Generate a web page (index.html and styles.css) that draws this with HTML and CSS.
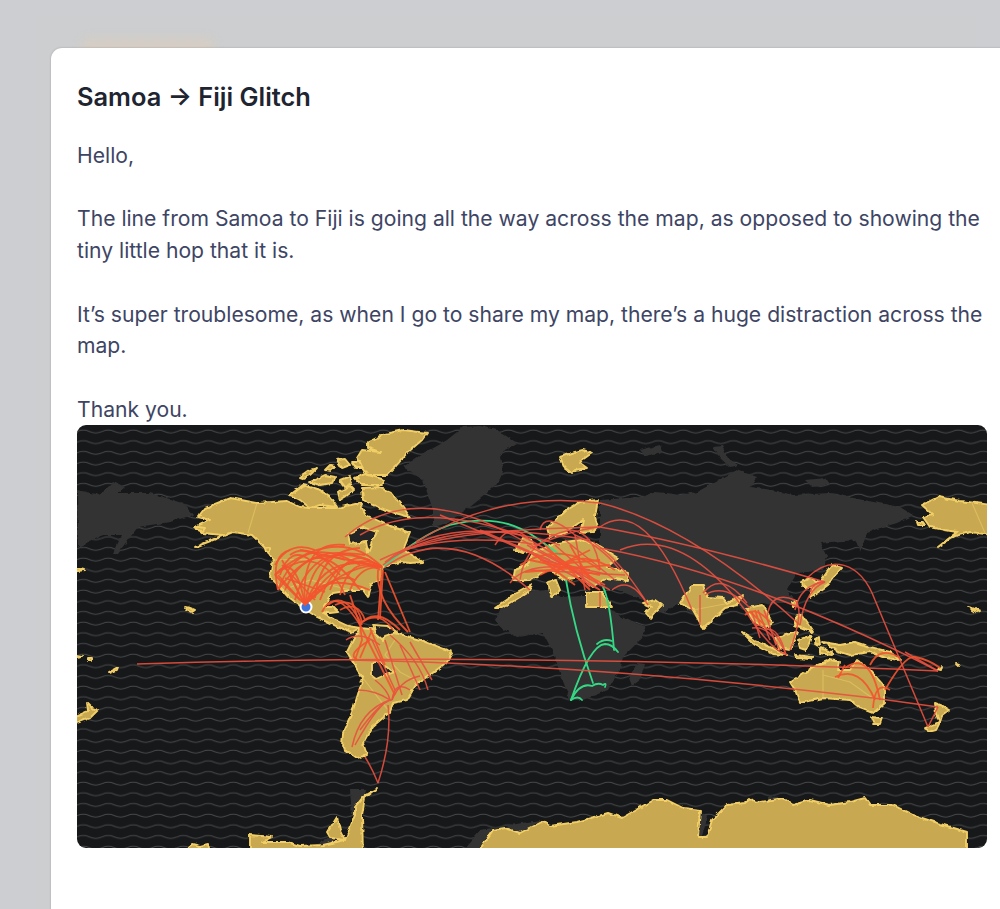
FILE: index.html
```html
<!DOCTYPE html>
<html lang="en">
<head>
<meta charset="utf-8">
<title>Samoa → Fiji Glitch</title>
<link rel="stylesheet" href="styles.css">
</head>
<body>
<div class="backdrop"><div class="panel"></div><div class="glow"></div></div>
<main class="card">
  <h1 class="title">Samoa → Fiji Glitch</h1>
  <p class="body-text">Hello,<br><br>The line from Samoa to Fiji is going all the way across the map, as opposed to showing the tiny little hop that it is.<br><br>It’s super troublesome, as when I go to share my map, there’s a huge distraction across the map.<br><br>Thank you.</p>
  <svg class="map" viewBox="77 425 910 423" role="img" aria-label="World map with flight routes">
    <defs>
      <pattern id="waves" x="77" y="425" width="25" height="10.67" patternUnits="userSpaceOnUse">
        <path class="wave" d="M0 6.5Q6.25 3.7 12.5 6.5T25 6.5"/>
      </pattern>
      <filter id="rough" x="-5%" y="-5%" width="110%" height="110%" color-interpolation-filters="sRGB">
        <feTurbulence type="fractalNoise" baseFrequency="0.16" numOctaves="2" seed="4" result="n"/>
        <feDisplacementMap in="SourceGraphic" in2="n" scale="4" xChannelSelector="R" yChannelSelector="G"/>
      </filter>
    </defs>
    <rect class="sea" x="77" y="425" width="910" height="423"/>
    <rect class="sea-waves" x="77" y="425" width="910" height="423"/>

    <g class="dark">
      <path d="M403 467L425 452 447 440 463 427 480 426 497 430 517 443 505 450 500 457 503 470 500 480 485 495 470 507 447 523 433 527 433 510 428 495 423 480Z"/>
      <path d="M600 500L640 497 655 492 667 493 680 495 697 492 715 482 737 470 757 477 750 487 772 490 793 495 830 493 863 500 900 507 913 515 897 523 867 532 860 552 855 540 820 543 827 557 823 570 797 573 787 590 795 603 763 603 743 610 730 600 707 627 680 603 662 613 643 600 617 590 590 585 600 540Z"/>
      <path d="M495 620L503 604 520 592 548 590 560 597 585 596 607 607 627 620 647 627 640 640 623 657 620 670 608 690 583 700 570 700 560 673 552 650 543 633 517 637 500 627Z"/>
      <path d="M638 663L645 664 640 680 632 686 629 678Z"/>
      <path d="M77 490L100 495 113 482 125 487 118 493 150 493 183 503 193 515 170 522 138 527 118 553 113 553 122 535 103 535 78 547Z"/>
      <path d="M713 447L722 446 728 458 738 465 730 467 720 458Z"/>
      <path d="M640 450L660 445 662 452 645 456Z"/>
      <path d="M805 480L825 478 830 485 812 487Z"/>
      <path d="M465 848L480 830 540 820 540 828 490 848Z"/>
      <path d="M310 848L330 838 340 845 330 848Z"/>
      <path d="M350 790L365 790 360 815 352 815Z"/>
      <path d="M696 810L708 816 702 836 698 836Z"/>
      <path d="M765 802L770 796 780 797 772 805Z"/>
    </g>

    <g class="gold">
      <!-- North America -->
      <path d="M205 508L230 498 257 503 287 501 300 507 310 508 337 508 360 503 366 515 385 524 410 533 403 550 412 555 423 562 410 563 400 562 383 567 380 580 372 584 368 597 363 590 353 590 333 593 323 607 333 607 338 612 330 613 322 612 335 620 348 626 360 628 352 632 338 627 317 617 303 608 290 598 283 590 270 577 273 560 267 550 252 535 233 532 213 540 195 547 223 535 203 533 195 527 210 520 198 517Z"/>
      <path class="bay" d="M348 534L363 527 377 532 372 542 368 552 366 542 350 544Z"/>
      <!-- Arctic -->
      <path d="M368 442L385 434 403 430 427 433 422 440 407 453 397 465 387 475 367 475 357 458 362 450 380 452 368 448Z"/>
      <path d="M362 488L378 487 390 492 403 507 410 517 395 513 380 508 363 500Z"/>
      <path d="M290 495L303 485 320 490 330 497 337 507 320 505 310 508 300 500Z"/>
      <path d="M300 477L310 470 317 468 310 475 303 478Z"/>
      <path d="M310 482L325 475 335 477 332 483 320 485Z"/>
      <path d="M340 480L350 476 352 484 345 487Z"/>
      <path d="M355 478L365 474 385 480 382 485 362 485Z"/>
      <path d="M337 460L345 459 350 465 342 468Z"/>
      <path d="M352 462L360 462 362 468 356 468Z"/>
      <path d="M325 470L330 465 335 466 330 471Z"/>
      <path d="M338 492L350 486 354 490 345 497 340 500Z"/>
      <path d="M198 527L205 528 203 531 197 530Z"/>
      <path d="M265 548L270 547 270 552 266 552Z"/>
      <path d="M185 607L190 608 195 610 192 612 186 609Z"/>
      <!-- South America -->
      <path d="M360 628L380 630 403 635 420 640 452 652 447 662 427 677 417 683 407 700 393 703 390 712 372 727 363 743 367 755 357 758 342 747 343 733 353 710 363 678 347 652 353 640Z"/>
      <path class="bay" d="M373 625L388 626 397 632 384 636 383 640 376 634Z"/>
      <path class="bay" d="M372 663L380 661 390 670 395 672 385 675 376 679 372 676Z"/>
      <!-- Antarctica -->
      <path d="M478 852L493 830 505 828 520 833 540 823 543 822 550 826 577 822 608 813 622 818 653 800 667 800 683 808 700 810 698 837 707 837 712 820 727 805 745 803 750 799 755 803 783 798 793 805 810 800 830 805 850 802 865 798 870 805 893 805 913 815 937 823 967 832 967 852Z"/>
      <path d="M250 852L250 835 272 837 262 842 287 842 300 846 323 845 345 840 355 815 355 807 363 797 378 788 365 798 362 815 363 852Z"/>
      <path d="M337 817L340 830 345 840 330 838 327 833Z"/>
      <path d="M187 852L192 844 200 846 208 844 210 852Z"/>
      <!-- Europe -->
      <path d="M547 528L567 510 580 502 598 500 595 517 598 527 593 532 580 533 583 520 573 527 563 533 550 538Z"/>
      <path d="M593 543L605 550 618 558 607 567 628 573 628 581 607 578 593 587 580 577 563 580 558 575 547 570 530 580 513 580 515 570 527 565 533 553 557 543 580 540Z"/>
      <path d="M523 538L532 540 537 550 523 553 515 550Z"/>
      <path d="M495 608L517 593 532 585 528 592 512 602 502 608Z"/>
      <path d="M548 582L556 580 560 590 553 597 550 592Z"/>
      <path d="M560 457L575 452 583 450 592 453 582 460 580 463 587 468 575 470 572 473 565 468Z"/>
      <path d="M586 592L602 592 612 607 586 607Z"/>
      <path d="M643 603L655 600 662 605 655 612 650 618 645 612 652 607Z"/>
      <!-- Asia -->
      <path d="M680 603L692 585 703 585 707 597 723 598 727 603 743 595 737 605 725 608 703 628 693 610Z"/>
      <path d="M747 608L763 605 773 623 765 628 752 620Z"/>
      <path d="M742 632L755 640 787 655 772 654 755 645Z"/>
      <path d="M775 638L797 632 790 650 778 648Z"/>
      <path d="M795 617L802 615 813 632 803 628 795 625Z"/>
      <path d="M798 640L812 635 806 650 800 648Z"/>
      <path d="M795 655L813 657 812 659 797 658Z"/>
      <path d="M802 582L810 578 820 582 832 565 842 568 832 578 828 585 810 598 812 587 803 587Z"/>
      <path d="M792 602L797 601 798 607 793 607Z"/>
      <path d="M815 640L819 637 820 645 815 643Z"/>
      <path d="M820 648L832 652 832 655 820 653Z"/>
      <!-- Australasia -->
      <path d="M823 642L840 645 855 642 870 647 890 652 900 660 885 658 870 652 850 655 835 650Z"/>
      <path d="M790 682L813 667 830 660 840 662 838 670 850 670 857 660 867 667 885 687 885 703 873 713 860 708 850 700 823 698 800 703 795 690Z"/>
      <path d="M871 717L882 718 880 724 874 724Z"/>
      <path d="M935 703L943 706 950 710 942 716 940 722 936 715Z"/>
      <path d="M926 728L940 722 936 730 928 732Z"/>
      <path d="M937 670L942 667 941 671Z"/>
      <path d="M956 663L960 664 959 666Z"/>
      <path d="M968 607L972 608 980 611 976 612Z"/>
      <!-- Wrapped pieces -->
      <path d="M922 505L938 497 960 501 992 505 992 535 970 532 955 536 938 547 957 532 945 530 930 527 923 517 933 515Z"/>
      <path d="M917 522L923 522 925 525 918 525Z"/>
      <path d="M87 703L92 708 98 710 90 718 72 725 72 718 88 711Z"/>
      <path d="M72 655L82 657 72 659Z"/>
      <path d="M88 658L91 658 91 661 88 661Z"/>
      <path d="M109 672L118 667 117 670 110 673Z"/>
      <path d="M72 567L84 570 72 572Z"/>
    </g>

    <g class="inner">
      <path d="M257 503L248 533"/>
      <path d="M972 503L985 533"/>
      <path d="M272 560L370 558"/>
      <path d="M283 590L310 580 350 590"/>
      <path d="M395 640L385 655 400 672 415 680"/>
      <path d="M363 678L380 700 390 712"/>
      <path d="M823 670L823 698M823 675L850 682 875 700"/>
      <path d="M693 610L730 603"/>
    </g>

    <g class="green">
      <path d="M385 566Q420 535 450 525 500 512 535 537 548 546 560 555"/>
      <path d="M566 580Q574 630 593 683"/>
      <path d="M603 587Q610 600 614 650"/>
      <path d="M571 700Q590 645 605 644 612 644 618 652"/>
      <path d="M597 644Q604 638 612 641"/>
      <path d="M571 700Q580 682 592 686 598 682 603 685 607 682 605 687"/>
      <path d="M571 700Q578 695 582 700"/>
    </g>

    <circle class="marker" cx="306" cy="607" r="5.5"/>

    <g class="routes thin">
      <path d="M137 664Q500 652 938 671"/>
      <path d="M350 660Q600 665 873 698"/>
      <path d="M873 698L938 707"/>
      <path d="M600 503Q690 525 800 625"/>
      <path d="M600 527Q700 545 825 582"/>
      <path d="M600 527Q645 495 692 610"/>
      <path d="M620 550Q680 525 745 610"/>
      <path d="M593 542Q620 560 645 600"/>
      <path d="M612 590Q630 575 648 605"/>
      <path d="M600 548Q750 575 938 671"/>
      <path d="M807 578C830 555 860 560 875 600Q900 660 928 727"/>
      <path d="M938 707L928 727"/>
      <path d="M600 503Q500 490 416 542"/>
      <path d="M345 537Q400 490 480 520 540 545 600 590"/>
      <path d="M360 535Q420 500 520 535 570 560 590 587"/>
      <path d="M400 553Q440 530 600 527"/>
      <path d="M385 562Q450 510 560 545"/>
      <path d="M383 565Q440 515 590 540"/>
      <path d="M380 560Q440 530 540 545"/>
      <path d="M385 567Q450 520 530 590"/>
      <path d="M378 783Q392 740 388 705"/>
      <path d="M365 757Q372 768 378 783"/>
      <path d="M703 593Q722 570 747 603"/>
      <path d="M705 595Q725 582 750 608"/>
      <path d="M700 595V625"/>
      <path d="M767 618Q770 590 795 600 805 610 790 650"/>
      <path d="M795 610Q800 585 825 582"/>
      <path d="M800 625Q805 590 825 582"/>
      <path d="M810 592Q815 580 825 582"/>
      <path d="M745 610Q770 650 787 655"/>
      <path d="M755 625Q775 625 786 655"/>
      <path d="M765 630Q778 625 786 655"/>
      <path d="M752 628Q770 625 780 650"/>
      <path d="M758 610L770 640M752 612L760 638M764 610L776 645"/>
      <path d="M346 640Q360 630 380 645"/>
      <path d="M905 652L938 671"/>
      <path d="M390 635Q420 660 428 690"/>
      <path d="M372 640L395 690"/>
      <path d="M400 645L420 690"/>
      <path d="M385 640L402 695M410 642L432 680"/>
      <path d="M352 747Q360 710 390 700M355 745Q380 700 392 700M360 730Q378 705 390 700M358 690Q375 690 390 700M375 680Q388 690 390 700M392 700Q400 680 420 676"/>
      <path d="M410 690Q395 680 392 700"/>
      <path d="M540 530Q545 510 575 535 600 545 620 570M520 580Q525 540 570 530 595 532 600 570"/>
      <path d="M510 583Q530 555 610 575M527 545L610 590M515 545L600 590M530 548Q570 530 600 527"/>
      <path d="M540 560L590 570M530 570L625 575M555 545L600 585M565 540L615 580M575 535L585 590"/>
      <path d="M495 545Q510 520 530 540M480 530L550 560M440 515L560 565"/>
      <path d="M600 592V607"/>
    </g>

    <g class="routes">
      <path d="M305 605Q295 550 275 575"/>
      <path d="M305 605Q315 530 382 567"/>
      <path d="M305 605Q325 550 382 567"/>
      <path d="M305 605Q345 545 382 567"/>
      <path d="M305 605Q350 560 382 567"/>
      <path d="M305 605Q300 540 345 545"/>
      <path d="M305 605L282 560"/>
      <path d="M305 605L278 575"/>
      <path d="M305 605L290 575"/>
      <path d="M305 605Q335 570 355 580"/>
      <path d="M305 605Q320 570 370 590"/>
      <path d="M278 590Q300 530 360 565"/>
      <path d="M278 590Q320 530 382 567"/>
      <path d="M280 570Q340 525 382 567"/>
      <path d="M280 575Q290 545 310 560 330 550 360 590"/>
      <path d="M275 575Q320 540 345 595"/>
      <path d="M290 555Q310 540 340 575"/>
      <path d="M320 600Q340 545 380 570"/>
      <path d="M340 595Q350 555 378 568"/>
      <path d="M300 550L382 567"/>
      <path d="M285 578L325 592"/>
      <path d="M290 550Q270 555 278 590"/>
      <path d="M275 565Q290 540 315 550"/>
      <path d="M315 598Q320 550 360 548"/>
      <path d="M285 590Q305 545 345 560"/>
      <path d="M295 600Q310 545 365 555"/>
      <path d="M330 590Q345 550 370 560"/>
      <path d="M350 590Q360 565 380 568"/>
      <path d="M275 575L300 600M282 565L315 600"/>
      <path d="M382 567L378 620"/>
      <path d="M378 570Q375 600 408 632"/>
      <path d="M383 570L380 618M385 572L410 632"/>
      <path d="M322 612Q335 585 360 625"/>
      <path d="M328 605Q345 590 362 625"/>
      <path d="M335 605Q355 595 362 622"/>
      <path d="M340 610Q358 600 365 620"/>
      <path d="M350 595L360 625"/>
      <path d="M360 625Q375 605 400 630"/>
      <path d="M362 622Q380 610 393 630"/>
      <path d="M360 625L362 640 355 660"/>
      <path d="M360 625L395 695"/>
      <path d="M370 640Q345 655 358 660"/>
      <path d="M360 658L372 630M370 628L385 665"/>
      <path d="M885 690Q905 655 915 657 930 660 940 668"/>
      <path d="M873 708Q875 680 890 690M838 678L845 665"/>
      <path d="M875 700Q860 665 835 677"/>
      <path d="M845 668Q870 650 880 700"/>
      <path d="M870 665Q880 645 900 658"/>
      <path d="M530 560L600 575M525 572L610 565M540 575L590 550M550 555L605 585M560 560L595 580"/>
      <path d="M545 545L590 590M535 555L575 585M520 565Q560 540 600 570M555 575Q575 545 615 570M570 545L590 580M548 565L600 560"/>
      <path d="M750 612L765 625M755 610L760 625M745 615Q755 605 770 622"/>
    </g>
  </svg>
</main>
</body>
</html>
```

FILE: styles.css
```css
* { box-sizing: border-box; }
html, body { margin: 0; height: 100%; }
body {
  width: 1000px;
  height: 909px;
  overflow: hidden;
  position: relative;
  background: #cdced2;
  padding: 48px 0 0 51px;
  font-family: Inter, "Liberation Sans", sans-serif;
}
.backdrop { position: absolute; inset: 0; }
.panel {
  position: absolute;
  left: 36px;
  top: 14px;
  width: 940px;
  height: 900px;
  background: #cdcecf;
}
.glow {
  position: absolute;
  left: 82px;
  top: 38px;
  width: 132px;
  height: 20px;
  border-radius: 6px;
  background: #d5cdc5;
  filter: blur(4px);
}
.card {
  position: relative;
  width: 980px;
  height: 900px;
  background: #fff;
  border-radius: 11px 0 0 0;
  box-shadow: 0 0 2px rgba(60,60,60,.35);
  padding: 31px 0 0 26px;
}
.title {
  margin: 0 0 25px;
  font-size: 25.4px;
  line-height: 36px;
  font-weight: 600;
  color: #1f2431;
}
.body-text {
  margin: 0;
  width: 912px;
  font-size: 21.14px;
  line-height: 31.7px;
  color: #3e4564;
}
.map {
  display: block;
  width: 910px;
  height: 423px;
  border-radius: 9px;
}
.sea { fill: #17181a; }
.sea-waves { fill: url(#waves); }
.wave { fill: none; stroke: #47484a; stroke-width: 1; }
.dark { filter: url(#rough); }
.dark path { fill: #333334; }
.gold { filter: url(#rough); }
.gold path {
  fill: #c8a850;
  stroke: #f2cf66;
  stroke-width: 1.9;
  stroke-linejoin: round;
}
.gold .bay { fill: #242426; }
.inner path { fill: none; stroke: #e6c566; stroke-width: 1.2; opacity: .7; }
.green path { fill: none; stroke: #35d985; stroke-width: 1.8; stroke-linecap: round; }
.routes path { fill: none; stroke: #f4532f; stroke-width: 1.8; opacity: .9; }
.routes.thin path { stroke: #e8503f; stroke-width: 1.5; }
.marker { fill: #3f74dc; stroke: #fff; stroke-width: 2; }
```
